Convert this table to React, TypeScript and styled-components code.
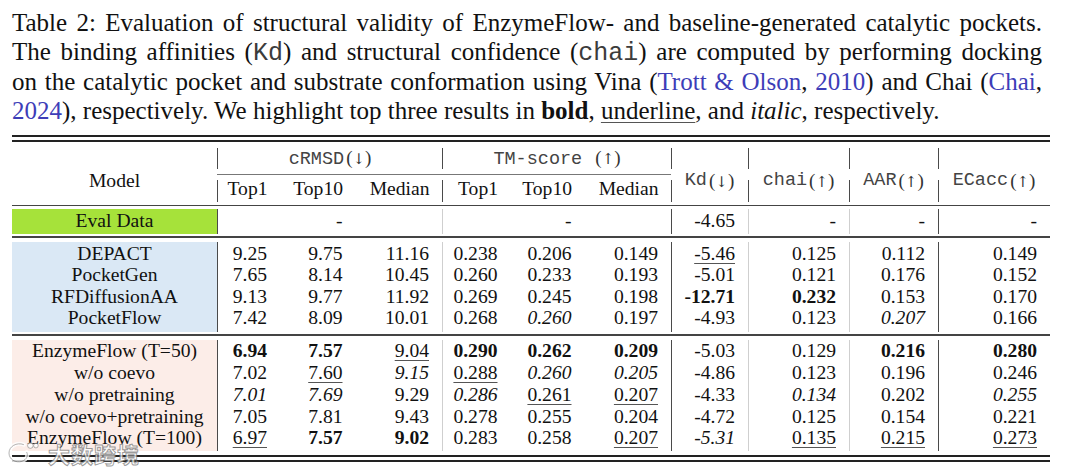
import React from 'react';
import styled, { createGlobalStyle } from 'styled-components';

const GlobalStyle = createGlobalStyle`
  html, body { margin: 0; padding: 0; background: #fff; }
  body { font-family: "Liberation Serif", "Times New Roman", serif; color: #111; }
`;

const COLS = '205px 63px 75.5px 86.5px 68.5px 74px 86.5px 77px 101px 89px 112px';
const DARK = '#4a4a4a';
const FAINT = '#cfcfcf';

const Page = styled.div`
  position: relative;
  width: 1080px;
  height: 470px;
  overflow: hidden;
  padding: 9px 0 0 12px;
  box-sizing: border-box;
`;

const Caption = styled.div`
  width: 1030px;
  font-size: 25px;
  line-height: 28.7px;
`;

const CaptionLine = styled.div<{ $last?: boolean }>`
  text-align: justify;
  text-align-last: ${(p) => (p.$last ? 'left' : 'justify')};
`;

const Mono = styled.span`
  font-family: "Liberation Mono", "Courier New", monospace;
  color: #3c3c3c;
`;

const Cite = styled.span`
  color: #3d3db8;
`;

const Under = styled.span`
  text-decoration: underline;
  text-decoration-thickness: 1px;
  text-underline-offset: 3px;
  text-decoration-color: #555;
`;

const Table = styled.div`
  width: 1038px;
  margin-top: 9.5px;
  font-size: 19.6px;
`;

const DoubleRule = styled.div<{ $above?: number; $below?: number }>`
  height: 3px;
  border-top: 2px solid #222;
  border-bottom: 2px solid #222;
  margin-top: ${(p) => p.$above ?? 0}px;
  margin-bottom: ${(p) => p.$below ?? 0}px;
`;

const Rule = styled.div<{ $weight: number; $above: number; $below: number }>`
  height: ${(p) => p.$weight}px;
  background: #444;
  margin: ${(p) => p.$above}px 0 ${(p) => p.$below}px;
`;

const HeaderGrid = styled.div`
  display: grid;
  grid-template-columns: ${COLS};
  grid-template-rows: 21px 11px 22px;
`;

const ModelHead = styled.div`
  grid-row: 1 / 4;
  grid-column: 1;
  display: flex;
  align-items: center;
  justify-content: center;
  padding-top: 11px;
  line-height: 22px;
`;

const GroupHead = styled.div<{ $col: number }>`
  grid-row: 1;
  grid-column: ${(p) => p.$col} / span 3;
  border-left: 1px solid ${DARK};
  text-align: center;
  font-family: "Liberation Mono", "Courier New", monospace;
  font-size: 18.5px;
  line-height: 20px;
  color: #444;
  white-space: pre;
`;

const Paren = styled.span`
  font-family: "Liberation Serif", serif;
  font-size: 19px;
  color: #333;
  margin-left: 2px;
`;

const ArrowGlyph = styled.span`
  font-family: "DejaVu Serif", serif;
  font-size: 15px;
`;

const CMidRule = styled.div`
  grid-row: 2;
  grid-column: 2 / 8;
  align-self: start;
  margin-top: 4.5px;
  height: 1px;
  background: #777;
`;

const SubHead = styled.div<{ $col: number; $sep?: boolean }>`
  grid-row: 3;
  grid-column: ${(p) => p.$col};
  text-align: right;
  padding-right: 12.5px;
  line-height: 18px;
  border-left: ${(p) => (p.$sep ? `1px solid ${DARK}` : 'none')};
`;

const MetricHead = styled.div<{ $col: number }>`
  grid-row: 1 / 4;
  grid-column: ${(p) => p.$col};
  display: flex;
  align-items: center;
  justify-content: center;
  padding-top: 11px;
  font-family: "Liberation Mono", "Courier New", monospace;
  font-size: 18.5px;
  color: #444;
  white-space: pre;
  background-image: linear-gradient(${DARK}, ${DARK}), linear-gradient(${DARK}, ${DARK});
  background-size: 1px 21px, 1px 22px;
  background-position: left top, left bottom;
  background-repeat: no-repeat;
`;

const Section = styled.div<{ $padTop: number; $padBottom: number }>`
  & > div:first-child > div {
    padding-top: ${(p) => p.$padTop}px;
  }
  & > div:last-child > div {
    padding-bottom: ${(p) => p.$padBottom}px;
  }
`;

const Row = styled.div<{ $h: number }>`
  display: grid;
  grid-template-columns: ${COLS};
  line-height: ${(p) => p.$h}px;
`;

type Tone = 'green' | 'blue' | 'pink';
const toneBg: Record<Tone, string> = {
  green: '#a6e23a',
  blue: '#dae8f5',
  pink: '#fcede8',
};

const ModelCell = styled.div<{ $tone: Tone }>`
  text-align: center;
  background: ${(p) => toneBg[p.$tone]};
  white-space: nowrap;
`;

type Sep = 'none' | 'dark' | 'faint';
const Cell = styled.div<{ $sep: Sep }>`
  text-align: right;
  padding-right: 13px;
  white-space: nowrap;
  border-left: ${(p) =>
    p.$sep === 'none' ? 'none' : `1px solid ${p.$sep === 'dark' ? DARK : FAINT}`};
`;

const Bold = styled.b`
  font-weight: 700;
`;
const Ital = styled.i`
  font-style: italic;
`;

const Watermark = styled.div`
  position: absolute;
  left: 4px;
  top: 440px;
  height: 26px;
  display: flex;
  align-items: center;
  gap: 8px;
  opacity: 0.85;
  pointer-events: none;
`;

const WatermarkText = styled.span`
  font-family: "Noto Sans CJK SC", "Noto Sans", sans-serif;
  font-size: 22px;
  line-height: 24px;
  font-weight: 700;
  color: rgba(255, 255, 255, 0.92);
  -webkit-text-stroke: 1px rgba(110, 110, 110, 0.8);
  letter-spacing: 1px;
`;

const SEPS: Sep[] = ['dark', 'none', 'none', 'faint', 'none', 'none', 'dark', 'faint', 'faint', 'dark'];

function Val({ v }: { v: string }) {
  if (!v) return null;
  const c = v[0];
  const t = v.slice(1);
  if (c === '*') return <Bold>{t}</Bold>;
  if (c === '_') return <Under>{t}</Under>;
  if (c === '/') return <Ital>{t}</Ital>;
  return <>{v}</>;
}

function DataRow({ name, tone, vals, h }: { name: string; tone: Tone; vals: string[]; h: number }) {
  return (
    <Row $h={h}>
      <ModelCell $tone={tone}>{name}</ModelCell>
      {vals.map((v, i) => (
        <Cell key={i} $sep={SEPS[i]}>
          <Val v={v} />
        </Cell>
      ))}
    </Row>
  );
}

const baselines: [string, string[]][] = [
  ['DEPACT', ['9.25', '9.75', '11.16', '0.238', '0.206', '0.149', '_-5.46', '0.125', '0.112', '0.149']],
  ['PocketGen', ['7.65', '8.14', '10.45', '0.260', '0.233', '0.193', '-5.01', '0.121', '0.176', '0.152']],
  ['RFDiffusionAA', ['9.13', '9.77', '11.92', '0.269', '0.245', '0.198', '*-12.71', '*0.232', '0.153', '0.170']],
  ['PocketFlow', ['7.42', '8.09', '10.01', '0.268', '/0.260', '0.197', '-4.93', '0.123', '/0.207', '0.166']],
];

const ours: [string, string[]][] = [
  ['EnzymeFlow (T=50)', ['*6.94', '*7.57', '_9.04', '*0.290', '*0.262', '*0.209', '-5.03', '0.129', '*0.216', '*0.280']],
  ['w/o coevo', ['7.02', '_7.60', '/9.15', '_0.288', '/0.260', '/0.205', '-4.86', '0.123', '0.196', '0.246']],
  ['w/o pretraining', ['/7.01', '/7.69', '9.29', '/0.286', '_0.261', '_0.207', '-4.33', '/0.134', '0.202', '/0.255']],
  ['w/o coevo+pretraining', ['7.05', '7.81', '9.43', '0.278', '0.255', '0.204', '-4.72', '0.125', '0.154', '0.221']],
  ['EnzymeFlow (T=100)', ['_6.97', '*7.57', '*9.02', '0.283', '0.258', '_0.207', '/-5.31', '_0.135', '_0.215', '_0.273']],
];

const LOGO_PATH = 'M20 5 C12 2 4 7 4 14 C4 21 11 25 18 23 C23 21 25 17 23 13';

function Logo() {
  return (
    <svg width="36" height="26" viewBox="0 0 36 28">
      <path d={LOGO_PATH} fill="none" stroke="rgba(255,255,255,0.95)" strokeWidth="4.5" strokeLinecap="round" />
      <path d={LOGO_PATH} fill="none" stroke="rgba(120,120,120,0.7)" strokeWidth="1" />
      <circle cx="27" cy="6" r="3" fill="rgba(255,255,255,0.95)" stroke="rgba(120,120,120,0.7)" strokeWidth="1" />
      <circle cx="33" cy="6" r="2.5" fill="rgba(255,255,255,0.95)" stroke="rgba(120,120,120,0.7)" strokeWidth="1" />
    </svg>
  );
}

function Head({ name, arrow, gap }: { name: string; arrow: string; gap?: boolean }) {
  return (
    <>
      {name}
      {gap ? ' ' : ''}
      <Paren>
        (<ArrowGlyph>{arrow}</ArrowGlyph>)
      </Paren>
    </>
  );
}

export default function App() {
  return (
    <>
      <GlobalStyle />
      <Page>
        <Caption>
          <CaptionLine>
            Table 2: Evaluation of structural validity of EnzymeFlow- and baseline-generated catalytic pockets.
          </CaptionLine>
          <CaptionLine>
            The binding affinities (<Mono>Kd</Mono>) and structural confidence (<Mono>chai</Mono>) are computed by performing docking
          </CaptionLine>
          <CaptionLine>
            on the catalytic pocket and substrate conformation using Vina (<Cite>Trott &amp; Olson</Cite>, <Cite>2010</Cite>) and Chai (<Cite>Chai</Cite>,
          </CaptionLine>
          <CaptionLine $last>
            <Cite>2024</Cite>), respectively. We highlight top three results in <Bold>bold</Bold>, <Under>underline</Under>, and{' '}
            <Ital>italic</Ital>, respectively.
          </CaptionLine>
        </Caption>

        <Table>
          <DoubleRule $below={6} />
          <HeaderGrid>
            <ModelHead>Model</ModelHead>
            <GroupHead $col={2}><Head name="cRMSD" arrow="↓" /></GroupHead>
            <GroupHead $col={5}><Head name="TM-score" arrow="↑" gap /></GroupHead>
            <MetricHead $col={8}><Head name="Kd" arrow="↓" /></MetricHead>
            <MetricHead $col={9}><Head name="chai" arrow="↑" /></MetricHead>
            <MetricHead $col={10}><Head name="AAR" arrow="↑" /></MetricHead>
            <MetricHead $col={11}><Head name="ECacc" arrow="↑" /></MetricHead>
            <CMidRule />
            <SubHead $col={2} $sep>Top1</SubHead>
            <SubHead $col={3}>Top10</SubHead>
            <SubHead $col={4}>Median</SubHead>
            <SubHead $col={5} $sep>Top1</SubHead>
            <SubHead $col={6}>Top10</SubHead>
            <SubHead $col={7}>Median</SubHead>
          </HeaderGrid>
          <Rule $weight={1} $above={3} $below={3} />
          <Section $padTop={0} $padBottom={2}>
            <DataRow name="Eval Data" tone="green" h={23} vals={['', '-', '', '', '-', '', '-4.65', '-', '-', '-']} />
          </Section>
          <Rule $weight={2} $above={2} $below={4} />
          <Section $padTop={0.5} $padBottom={3.5}>
            {baselines.map(([n, v]) => (
              <DataRow key={n} name={n} tone="blue" h={21.5} vals={v} />
            ))}
          </Section>
          <Rule $weight={2} $above={2} $below={4} />
          <Section $padTop={0} $padBottom={2}>
            {ours.map(([n, v]) => (
              <DataRow key={n} name={n} tone="pink" h={21.75} vals={v} />
            ))}
          </Section>
          <DoubleRule $above={4} />
        </Table>

        <Watermark>
          <Logo />
          <WatermarkText>大数跨境</WatermarkText>
        </Watermark>
      </Page>
    </>
  );
}
